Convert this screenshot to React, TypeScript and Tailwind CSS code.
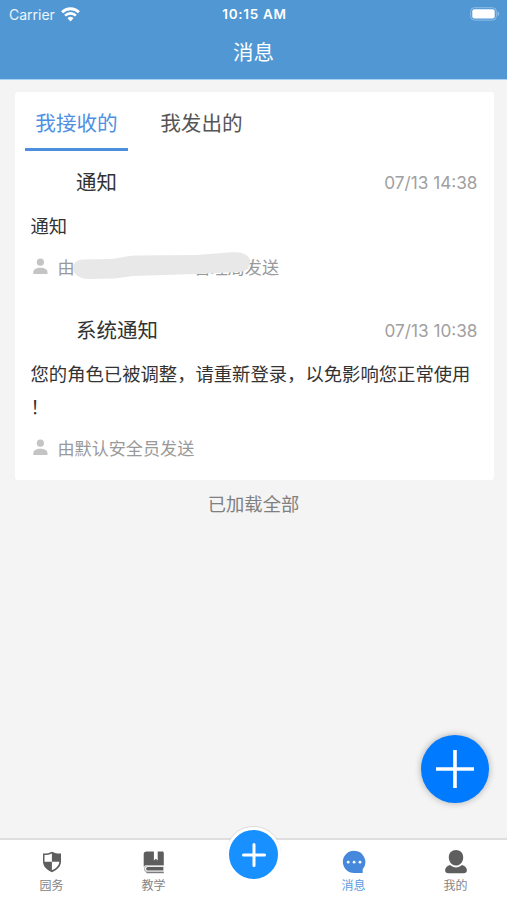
import { useState } from "react";
import type { ReactNode } from "react";

type Message = {
  id: number;
  title: string;
  time: string;
  lines: string[];
  sender: string;
  masked?: boolean;
};

const messages: Message[] = [
  { id: 1, title: "通知", time: "07/13 14:38", lines: ["通知"], sender: "管理局发送", masked: true },
  {
    id: 2,
    title: "系统通知",
    time: "07/13 10:38",
    lines: ["您的角色已被调整，请重新登录，以免影响您正常使用", "！"],
    sender: "由默认安全员发送",
  },
];

function WifiIcon() {
  return (
    <svg width="19" height="15" viewBox="0 0 19 15" fill="none" stroke="#fff">
      <path d="M1.1 5.2a12 12 0 0 1 16.8 0" strokeWidth="2.9" />
      <path d="M4.1 8.6a7.7 7.7 0 0 1 10.8 0" strokeWidth="2.6" />
      <path d="M9.5 14.4 6.5 11.3a4.3 4.3 0 0 1 6 0z" fill="#fff" stroke="none" />
    </svg>
  );
}

function BatteryIcon() {
  return (
    <svg width="30" height="14" viewBox="0 0 30 14">
      <rect x="0.7" y="0.7" width="25.6" height="12.4" rx="3.6" fill="none" stroke="#8fbde6" strokeWidth="1" />
      <rect x="2.3" y="2.3" width="22.4" height="9.2" rx="2" fill="#fff" />
      <path d="M27.6 4.6c1.6.6 1.6 4 0 4.6z" fill="#a5cbec" />
    </svg>
  );
}

function SenderIcon() {
  return (
    <svg className="mt-[-3px]" width="15" height="17" viewBox="0 0 15 17" fill="#c4c4c4">
      <circle cx="7.4" cy="4.2" r="3.6" />
      <path d="M0.3 16v-1.8c0-2.7 3-4.4 7.1-4.4s7.1 1.7 7.1 4.4V16z" />
    </svg>
  );
}

function ShieldIcon() {
  return (
    <svg width="20" height="22" viewBox="0 0 20 22">
      <path d="M10 0.8c2.8 1.5 5.8 1.9 9 1.8v8c0 4.8-3.6 8.4-9 10.6-5.4-2.2-9-5.8-9-10.6v-8c3.2.1 6.2-.3 9-1.8z" fill="#5e5e5e" />
      <path d="M9.9 2.6v8.2H2.5V4.1c2.6 0 5-.4 7.4-1.5zM9.9 10.8h7.4c-.2 3.7-3.1 6.7-7.4 8.5z" fill="#fff" />
    </svg>
  );
}

function BookIcon() {
  return (
    <svg width="22" height="23" viewBox="0 0 22 23">
      <path d="M3.4 0.6h7.5v8.8l1.9-1.6 1.9 1.6V.6h4.6c.9 0 1.5.6 1.5 1.5v12H4.2c-1.5 0-2.6.5-3.5 1.6V3.3C.7 1.6 1.7.6 3.4.6z" fill="#5e5e5e" />
      <path d="M20.8 14.7H4.9c-2.2 0-3.4 1.3-3.4 3.100s1.200 3.100 3.400 3.100h15.900" fill="none" stroke="#bdbdbd" strokeWidth="1.300" />
      <path d="M4.800 16h15.600v3.600H4.800c-2.200 0-2.200-3.600 0-3.600z" fill="#5e5e5e" />
      <path d="M3.400 21.700h17.400" stroke="#666" strokeWidth="1" />
    </svg>
  );
}

function ChatIcon() {
  return (
    <svg width="24" height="24" viewBox="0 0 24 24">
      <path d="M12 0.7a11.3 11.3 0 0 1 8.7 18.5v3.900l-8.700-.1A11.150 11.150 0 0 1 12 .7z" fill="#4689dc" />
      <g fill="#fff">
        <circle cx="6.2" cy="12.2" r="1.4" />
        <circle cx="12.1" cy="12.2" r="1.4" />
        <circle cx="18" cy="12.2" r="1.4" />
      </g>
    </svg>
  );
}

function UserIcon() {
  return (
    <svg width="22" height="24" viewBox="0 0 22 24" fill="#5e5e5e">
      <path d="M11 0.1c4.2 0 7.2 3 7.2 7.2 0 3-1.2 5.6-3.2 6.9-2.2 1.7-5.6 1.7-8 0C5 12.9 3.8 10.3 3.8 7.3 3.8 3.1 6.8.1 11 .1z" />
      <path d="M5.1 14.9c3.3 3.3 8.5 3.3 11.8 0 3 .9 5 2.700 5 5.100 0 2.200-1.200 3.300-3.400 3.300H3.500C1.300 23.300.1 22.200.1 20c0-2.400 2-4.200 5-5.100z" />
    </svg>
  );
}

function MessageItem({ message }: { message: Message }) {
  return (
    <article className="h-[148px] last:h-[181px]">
      <div className="flex h-[59px] items-center justify-between pt-[3px] pr-[16px] pl-[61.5px]">
        <h2 className="pt-[2px] text-[20.5px] leading-none text-[#333]">{message.title}</h2>
        <time className="pt-px text-[17.2px] leading-none text-[#a0a0a0]">{message.time}</time>
      </div>
      <div className="pl-[16px] text-[18.33px] leading-[33px] whitespace-nowrap text-[#333]">
        {message.lines.map((line) => (
          <p key={line}>{line}</p>
        ))}
      </div>
      <div className="relative flex h-[50px] items-center pl-[18px] text-[17.1px] leading-none text-[#999]">
        <SenderIcon />
        {message.masked ? (
          <>
            <span className="ml-[10px]">由</span>
            <span className="ml-[119px]">{message.sender}</span>
            {/* Brush stroke over the sender's organisation */}
            <svg className="absolute top-[7px] left-[56px]" width="182" height="32" viewBox="0 0 182 32">
              <path
                d="M12 9.5L40 9C50 8 56 6 64 5.5L125 5L158 2.5C170 1 179 4 179 12C179 18 176 21 169 22L125 24L62 26L44 28.5L18 29C8 29 2 24 2 18C2 13 6 10 12 9.5Z"
                fill="#e8e8e8"
              />
            </svg>
          </>
        ) : (
          <span className="ml-[10px]">{message.sender}</span>
        )}
      </div>
    </article>
  );
}

function NavItem({ label, active, children }: { label: string; active?: boolean; children: ReactNode }) {
  return (
    <button type="button" className="flex w-[102px] flex-col items-center pt-[10px]">
      <span className="flex h-6 items-center justify-center">{children}</span>
      <span className={`mt-[6px] text-[12px] leading-none ${active ? "text-[#5a9ade]" : "text-[#858585]"}`}>{label}</span>
    </button>
  );
}

export default function App() {
  const [tab, setTab] = useState(0);

  return (
    <div className="relative flex h-[900px] w-[507px] flex-col overflow-hidden bg-[#f4f4f4] font-['Inter','Noto_Sans_CJK_SC',sans-serif]">
      <header className="h-[79.5px] shrink-0 border-b border-[#a9d2f5] bg-[#5097d3] text-white">
        <div className="grid h-7 grid-cols-3 items-center pr-[7px] pl-[9px]">
          <div className="flex items-center gap-[6px] text-[14px] text-white/90">
            <span>Carrier</span>
            <WifiIcon />
          </div>
          <div className="text-center text-[13.5px] font-semibold tracking-[0.7px] whitespace-nowrap">10:15 AM</div>
          <div className="flex justify-end">
            <BatteryIcon />
          </div>
        </div>
        <h1 className="flex h-[48px] items-center justify-center pt-[2px] text-[20.5px] leading-none">消息</h1>
      </header>

      <main className="flex-1 px-[14.5px] pt-[12.5px]">
        <section className="mr-[-1px] h-[388px] rounded-[3px] bg-white">
          <div className="flex h-[59px] pl-[10.5px] text-[20.6px]">
            {["我接收的", "我发出的"].map((name, i) => (
              <button
                key={name}
                type="button"
                onClick={() => setTab(i)}
                className={`flex h-full items-center justify-center border-b-[3px] px-[10.3px] pt-[8px] leading-none ${
                  tab === i ? "border-[#4c8fde] text-[#4f90e3]" : "ml-[22px] border-transparent text-[#555]"
                }`}
              >
                {name}
              </button>
            ))}
          </div>
          {messages.map((m) => (
            <MessageItem key={m.id} message={m} />
          ))}
        </section>
        <p className="pt-[15px] text-center text-[18.3px] leading-none text-[#808080]">已加载全部</p>
      </main>

      <button
        type="button"
        aria-label="新建"
        className="absolute top-[735px] left-[421px] flex size-[68px] items-center justify-center rounded-full bg-[#007aff] shadow-[0_0_7px_rgba(0,0,0,0.3)]"
      >
        <svg width="38" height="38" viewBox="0 0 38 38" stroke="#fff" strokeWidth="3.6">
          <path d="M19 0v38M0 19h38" />
        </svg>
      </button>

      <nav className="flex h-[62px] shrink-0 justify-center border-t-2 border-[#dedede] bg-white">
        <NavItem label="园务">
          <ShieldIcon />
        </NavItem>
        <NavItem label="教学">
          <BookIcon />
        </NavItem>
        <div className="flex w-[98px] justify-center">
          <button
            type="button"
            aria-label="添加"
            className="mt-[-13px] flex size-[55px] items-center justify-center rounded-full border-[3px] border-white bg-[#1890ff] shadow-[0_-1px_1px_rgba(0,0,0,0.1)]"
          >
            <svg width="24" height="24" viewBox="0 0 24 24" stroke="#fff" strokeWidth="3" strokeLinecap="round">
              <path d="M12 1.5v21M1.5 12h21" />
            </svg>
          </button>
        </div>
        <NavItem label="消息" active>
          <ChatIcon />
        </NavItem>
        <NavItem label="我的">
          <UserIcon />
        </NavItem>
      </nav>
    </div>
  );
}
